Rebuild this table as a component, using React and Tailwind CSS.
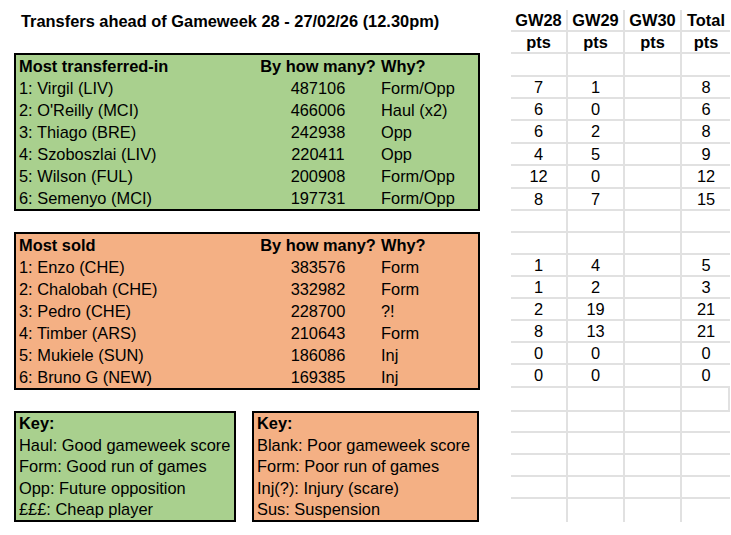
import React from 'react';

const inList = [
  ['1: Virgil (LIV)', '487106', 'Form/Opp'],
  ["2: O'Reilly (MCI)", '466006', 'Haul (x2)'],
  ['3: Thiago (BRE)', '242938', 'Opp'],
  ['4: Szoboszlai (LIV)', '220411', 'Opp'],
  ['5: Wilson (FUL)', '200908', 'Form/Opp'],
  ['6: Semenyo (MCI)', '197731', 'Form/Opp'],
];

const soldList = [
  ['1: Enzo (CHE)', '383576', 'Form'],
  ['2: Chalobah (CHE)', '332982', 'Form'],
  ['3: Pedro (CHE)', '228700', '?!'],
  ['4: Timber (ARS)', '210643', 'Form'],
  ['5: Mukiele (SUN)', '186086', 'Inj'],
  ['6: Bruno G (NEW)', '169385', 'Inj'],
];

const goodKey = ['Haul: Good gameweek score', 'Form: Good run of games', 'Opp: Future opposition', '£££: Cheap player'];
const badKey = ['Blank: Poor gameweek score', 'Form: Poor run of games', 'Inj(?): Injury (scare)', 'Sus: Suspension'];

// punten per rij, rij 0 = koprij
const pts = [
  ['GW28', 'GW29', 'GW30', 'Total'],
  ['pts', 'pts', 'pts', 'pts'],
  [],
  ['7', '1', '', '8'],
  ['6', '0', '', '6'],
  ['6', '2', '', '8'],
  ['4', '5', '', '9'],
  ['12', '0', '', '12'],
  ['8', '7', '', '15'],
  [],
  [],
  ['1', '4', '', '5'],
  ['1', '2', '', '3'],
  ['2', '19', '', '21'],
  ['8', '13', '', '21'],
  ['0', '0', '', '0'],
  ['0', '0', '', '0'],
  [],
  [],
  [],
  [],
  [],
  [],
];

function TransferBox({ title, rows, bg }) {
  return (
    <div className={`border-2 border-black ${bg} w-[466px]`}>
      <div className="grid grid-cols-[242px_120px_1fr] h-[22px] items-center font-bold">
        <span className="pl-[3px]">{title}</span>
        <span className="text-center">By how many?</span>
        <span className="pl-[3px]">Why?</span>
      </div>
      {rows.map((r, i) => (
        <div key={i} className="grid grid-cols-[242px_120px_1fr] h-[22px] items-center">
          <span className="pl-[3px]">{r[0]}</span>
          <span className="text-center">{r[1]}</span>
          <span className="pl-[3px]">{r[2]}</span>
        </div>
      ))}
    </div>
  );
}

function KeyBox({ lines, bg, width }) {
  return (
    <div className={`border-2 border-black ${bg} ${width} pl-[3px]`}>
      <div className="h-[21.4px] flex items-center font-bold">Key:</div>
      {lines.map((l, i) => (
        <div key={i} className="h-[21.4px] flex items-center">{l}</div>
      ))}
    </div>
  );
}

export default function App() {
  return (
    <div className="w-[731px] h-[535px] bg-white flex text-[16.4px] text-black font-['Liberation_Sans',Arial,sans-serif] leading-none">
      {/* linkerkant: titel en blokken */}
      <div className="w-[511px] pl-[14px] pt-[10px] flex flex-col">
        <div className="h-[22px] flex items-center pl-[7px] font-bold">
          Transfers ahead of Gameweek 28 - 27/02/26 (12.30pm)
        </div>
        <div className="mt-[21px]">
          <TransferBox title="Most transferred-in" rows={inList} bg="bg-[#a9d08e]" />
        </div>
        <div className="mt-[21px]">
          <TransferBox title="Most sold" rows={soldList} bg="bg-[#f4b084]" />
        </div>
        <div className="mt-[21px] flex gap-[16px]">
          <KeyBox lines={goodKey} bg="bg-[#a9d08e]" width="w-[222px]" />
          <KeyBox lines={badKey} bg="bg-[#f4b084]" width="w-[227px]" />
        </div>
      </div>

      {/* rechterkant: puntenraster */}
      <div className="pt-[10px]">
        <div className="grid grid-cols-[57px_57px_57px_48px] grid-rows-[22px_22px_23px_22px_22px_23px_22px_23px_22px_22px_22px_22px_22px_22px_22px_22px_23px_24px_21px_22px_22px_22px_23px]">
          {pts.map((row, r) =>
            [0, 1, 2, 3].map(c => (
              <div
                key={r + '-' + c}
                className={[
                  'flex items-center justify-center',
                  r < 2 ? 'font-bold' : '',
                  r < 22 ? 'border-b-2 border-b-[#e1e1e1]' : '',
                  c < 3 || r === 17 ? 'border-r-2 border-r-[#e1e1e1]' : '',
                ].join(' ')}
              >
                {row[c] ?? ''}
              </div>
            ))
          )}
        </div>
      </div>
    </div>
  );
}
